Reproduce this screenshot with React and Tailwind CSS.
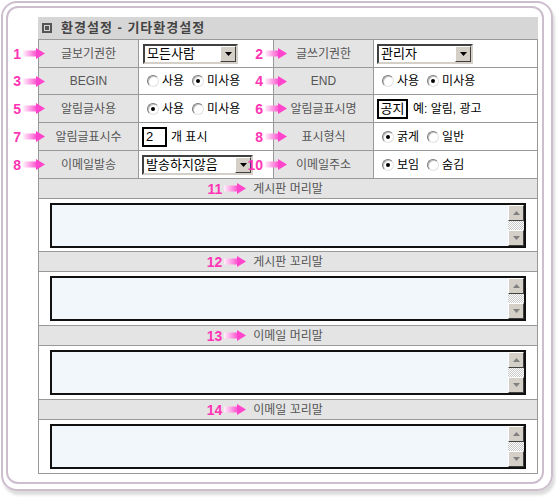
import React from 'react'

const KR = '[font-family:"Liberation_Sans","Noto_Sans_CJK_KR",sans-serif]'

function Arrow() {
  return (
    <svg width="22" height="11" viewBox="0 0 22 11" className="block shrink-0">
      <defs>
        <linearGradient id="arrowFade" x1="0" x2="1" y1="0" y2="0">
          <stop offset="0" stopColor="#fff2fb" />
          <stop offset="1" stopColor="#ff4fcf" />
        </linearGradient>
      </defs>
      <rect x="0" y="2.5" width="14" height="6" fill="url(#arrowFade)" />
      <polygon points="13,0 22,5.5 13,11" fill="#ff45cc" />
    </svg>
  )
}

// 번호 + 화살표 (라벨 칸 왼쪽에 걸쳐서 표시)
function Marker({ n, inset }) {
  return (
    <span
      className={`absolute right-full top-1/2 flex -translate-y-1/2 items-center gap-[2px] ${inset}`}
    >
      <span className="text-[14px] leading-none font-bold text-[#ff35b4] [font-family:'Liberation_Sans',sans-serif]">
        {n}
      </span>
      <Arrow />
    </span>
  )
}

function Label({ n, children, inset }) {
  return (
    <div className="relative flex items-center justify-center bg-[#e4e4e4] text-[12px] text-[#555]">
      <Marker n={n} inset={inset} />
      <span className="whitespace-nowrap">{children}</span>
    </div>
  )
}

function Radio({ checked }) {
  return (
    <span className="relative inline-block size-[12px] shrink-0 rounded-full border border-t-[#7a7a7a] border-r-[#e2e2e2] border-b-[#e2e2e2] border-l-[#7a7a7a] bg-white shadow-[inset_1px_1px_0_#c0c0c0]">
      {checked && (
        <span className="absolute top-1/2 left-1/2 size-[4px] -translate-x-1/2 -translate-y-1/2 rounded-full bg-black" />
      )}
    </span>
  )
}

function RadioPair({ a, b, first }) {
  return (
    <div className="flex items-center gap-[3px] bg-white pl-2 text-[12px] text-black">
      <Radio checked={first} />
      <span>{a}</span>
      <span className="w-[2px]" />
      <Radio checked={!first} />
      <span>{b}</span>
    </div>
  )
}

function Select({ value, width }) {
  return (
    <div
      className={`flex h-[20px] items-center border-2 border-t-[#404040] border-r-[#d4d0c8] border-b-[#d4d0c8] border-l-[#404040] bg-white ${width}`}
    >
      <span className="flex-1 pl-[2px] text-[13px] leading-none whitespace-nowrap text-black">{value}</span>
      <span className="flex h-[16px] w-[16px] items-center justify-center border border-t-[#fff] border-r-[#404040] border-b-[#404040] border-l-[#fff] bg-[#d4d0c8]">
        <svg width="7" height="4" viewBox="0 0 7 4">
          <polygon points="0,0 7,0 3.5,4" fill="#000" />
        </svg>
      </span>
    </div>
  )
}

function ScrollButton({ up }) {
  return (
    <span className="flex h-[16px] w-[16px] items-center justify-center border border-t-[#fff] border-r-[#404040] border-b-[#404040] border-l-[#fff] bg-[#d4d0c8]">
      <svg width="7" height="4" viewBox="0 0 7 4">
        <polygon points={up ? '0,4 7,4 3.5,0' : '0,0 7,0 3.5,4'} fill="#808080" />
      </svg>
    </span>
  )
}

function TextBlock({ n, title, height }) {
  return (
    <>
      <div className="flex h-[20px] items-center justify-center border-t border-[#999] bg-[#e4e4e4] text-[12px] text-[#555]">
        <span className="relative">
          <span className="absolute top-1/2 right-full mr-[7px] flex -translate-y-1/2 items-center gap-[2px]">
            <span className="text-[14px] leading-none font-bold text-[#ff35b4] [font-family:'Liberation_Sans',sans-serif]">
              {n}
            </span>
            <Arrow />
          </span>
          {title}
        </span>
      </div>
      <div className={`flex items-center border-t border-[#999] bg-white pl-[11px] ${height}`}>
        <div className="flex h-[45px] w-[476px] border-2 border-[#111] bg-[#f2f7fb]">
          <div className="flex-1" />
          <div className="flex w-[16px] flex-col">
            <ScrollButton up />
            <div className="flex-1 bg-[repeating-conic-gradient(#c8c8c8_0_25%,#ffffff_0_50%)] bg-[length:2px_2px]" />
            <ScrollButton />
          </div>
        </div>
      </div>
    </>
  )
}

export default function App() {
  return (
    <div className={`h-[500px] w-[557px] bg-white pt-px pl-px ${KR}`}>
      <div className="h-[490px] w-[552px] rounded-[16px] border-2 border-[#cdbecd] pt-[3px] pr-[7px] pb-[5px] pl-[3px] shadow-[2px_4px_3px_#dcdcdc]">
        <div className="h-full rounded-[12px] border-2 border-[#cdbecd] pt-[9px] pl-[30px]">
          <div className="w-[500px]">
            {/* 제목 */}
            <div className="flex h-[22px] items-center gap-[9px] bg-[#d6d6d6] pl-[4px]">
              <span className="flex size-[10px] items-center justify-center border-2 border-[#555]">
                <span className="size-[4px] bg-[#555]" />
              </span>
              <span className="text-[13px] font-bold tracking-[1px] text-[#444]">환경설정 - 기타환경설정</span>
            </div>

            <div className="border border-[#999]">
              <div className="grid grid-cols-[99px_134px_99px_163px] grid-rows-[27px_26px_27px_27px_27px] gap-px bg-[#999]">
                <Label n="1" inset="translate-x-[6px]">글보기권한</Label>
                <div className="flex items-center bg-white pl-[4px]">
                  <Select value="모든사람" width="w-[95px]" />
                </div>
                <Label n="2" inset="translate-x-[13px]">글쓰기권한</Label>
                <div className="flex items-center bg-white pl-[3px]">
                  <Select value="관리자" width="w-[96px]" />
                </div>

                <Label n="3" inset="translate-x-[6px]">BEGIN</Label>
                <RadioPair a="사용" b="미사용" first={false} />
                <Label n="4" inset="translate-x-[13px]">END</Label>
                <RadioPair a="사용" b="미사용" first={false} />

                <Label n="5" inset="translate-x-[6px]">알림글사용</Label>
                <RadioPair a="사용" b="미사용" first />
                <Label n="6" inset="translate-x-[13px]">알림글표시명</Label>
                <div className="flex items-center gap-[5px] bg-white pl-[3px] text-[12px] text-black">
                  <span className="flex h-[20px] w-[31px] items-center justify-center border-2 border-black text-[13px]">
                    공지
                  </span>
                  <span>예: 알림, 광고</span>
                </div>

                <Label n="7" inset="translate-x-[6px]">알림글표시수</Label>
                <div className="flex items-center gap-[4px] bg-white pl-[3px] text-[12px] text-black">
                  <span className="flex h-[20px] w-[25px] items-center border-2 border-black pl-[2px] text-[13px]">
                    2
                  </span>
                  <span>개 표시</span>
                </div>
                <Label n="8" inset="translate-x-[13px]">표시형식</Label>
                <RadioPair a="굵게" b="일반" first />

                <Label n="8" inset="translate-x-[6px]">이메일발송</Label>
                <div className="flex items-center bg-white pl-[3px]">
                  <Select value="발송하지않음" width="w-[111px]" />
                </div>
                <Label n="10" inset="translate-x-[13px]">이메일주소</Label>
                <RadioPair a="보임" b="숨김" first />
              </div>

              <TextBlock n="11" title="게시판 머리말" height="h-[53px]" />
              <TextBlock n="12" title="게시판 꼬리말" height="h-[54px]" />
              <TextBlock n="13" title="이메일 머리말" height="h-[54px]" />
              <TextBlock n="14" title="이메일 꼬리말" height="h-[54px]" />
            </div>
          </div>
        </div>
      </div>
    </div>
  )
}
